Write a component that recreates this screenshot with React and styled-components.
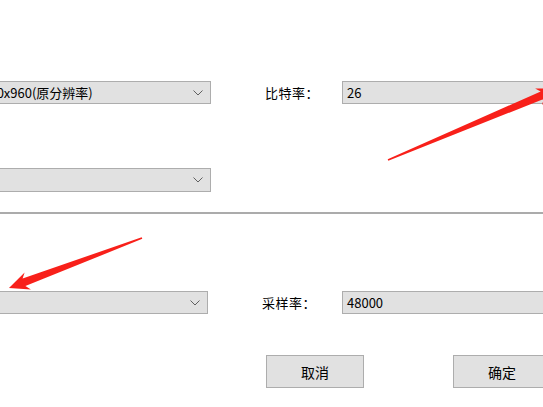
import React from "react";
import styled, { createGlobalStyle } from "styled-components";

const GlobalStyle = createGlobalStyle`
  html, body {
    margin: 0;
    padding: 0;
    background: #fff;
    overflow: hidden;
  }
  body {
    font-family: "Noto Sans CJK SC", "Liberation Sans", sans-serif;
    font-size: 13px;
    color: #000;
  }
`;

// the dialog is cropped: its left label column sits outside the window
const Dialog = styled.div`
  position: relative;
  width: 700px;
  height: 407px;
  margin-left: -120px;
  padding-top: 81px;
  box-sizing: border-box;
`;

// label column takes what is left so every field starts at the same x
const Row = styled.div`
  display: grid;
  width: 692px;
  grid-template-columns: 90px ${(p) => p.$comboWidth}px 54px 1fr 230px;
  align-items: center;
  height: ${(p) => p.$height}px;
  margin-top: ${(p) => p.$top || 0}px;
`;

const Label = styled.span`
  font-size: 13px;
  white-space: nowrap;
  letter-spacing: 0.5px;
`;

const Combo = styled.div`
  height: 100%;
  box-sizing: border-box;
  display: flex;
  align-items: center;
  justify-content: space-between;
  padding: 0 7px 0 4px;
  background: #e1e1e1;
  border: 1px solid #adadad;
  white-space: nowrap;
  overflow: hidden;
`;

const Field = styled.div`
  height: 100%;
  box-sizing: border-box;
  display: flex;
  align-items: center;
  padding-left: 4px;
  background: #e1e1e1;
  border: 1px solid #adadad;
`;

const Divider = styled.div`
  height: 2px;
  background: #ababab;
  margin-top: 20px;
`;

const Footer = styled.div`
  display: flex;
  gap: 89px;
  margin-top: 41px;
  padding-left: 386px;
`;

const Button = styled.div`
  width: 98px;
  height: 33px;
  flex: none;
  box-sizing: border-box;
  display: flex;
  align-items: center;
  justify-content: center;
  background: #e1e1e1;
  border: 1px solid #adadad;
  font-size: 14px;
`;

const Overlay = styled.svg`
  position: absolute;
  left: 0;
  top: 0;
  pointer-events: none;
`;

function Chevron() {
  return (
    <svg width="10" height="6" viewBox="0 0 10 6">
      <path d="M0.5 0.5 L5 5 L9.5 0.5" fill="none" stroke="#606060" strokeWidth="1" />
    </svg>
  );
}

function arrowPoints(tail, tip, { w0 = 0.9, w1 = 4, hw = 9, headLen = 20, barb = 4 } = {}) {
  const dx = tip[0] - tail[0];
  const dy = tip[1] - tail[1];
  const len = Math.hypot(dx, dy);
  const u = [dx / len, dy / len];
  const n = [-u[1], u[0]];
  const wing = [tip[0] - u[0] * headLen, tip[1] - u[1] * headLen];
  const join = [tip[0] - u[0] * (headLen - barb), tip[1] - u[1] * (headLen - barb)];
  const pts = [
    [tail[0] + n[0] * w0, tail[1] + n[1] * w0],
    [join[0] + n[0] * w1, join[1] + n[1] * w1],
    [wing[0] + n[0] * hw, wing[1] + n[1] * hw],
    tip,
    [wing[0] - n[0] * hw, wing[1] - n[1] * hw],
    [join[0] - n[0] * w1, join[1] - n[1] * w1],
    [tail[0] - n[0] * w0, tail[1] - n[1] * w0],
  ];
  return pts.map((p) => p[0].toFixed(1) + "," + p[1].toFixed(1)).join(" ");
}

export default function App() {
  return (
    <>
      <GlobalStyle />
      <Dialog>
        <Row $comboWidth={241} $height={23}>
          <Label>分辨率：</Label>
          <Combo>
            <span>1280x960(原分辨率)</span>
            <Chevron />
          </Combo>
          <span />
          <Label>比特率：</Label>
          <Field>26</Field>
        </Row>
        <Row $comboWidth={241} $height={24} $top={64}>
          <Label>帧率：</Label>
          <Combo>
            <span />
            <Chevron />
          </Combo>
        </Row>
        <Divider />
        <Row $comboWidth={238} $height={23} $top={77}>
          <Label>声道：</Label>
          <Combo>
            <span />
            <Chevron />
          </Combo>
          <span />
          <Label>采样率：</Label>
          <Field>48000</Field>
        </Row>
        <Footer>
          <Button>取消</Button>
          <Button>确定</Button>
        </Footer>
      </Dialog>
      <Overlay width="543" height="407" viewBox="0 0 543 407">
        <polygon points={arrowPoints([388, 160], [557, 89])} fill="#f8201a" />
        <polygon points={arrowPoints([142, 238], [9, 288])} fill="#f8201a" />
      </Overlay>
    </>
  );
}
